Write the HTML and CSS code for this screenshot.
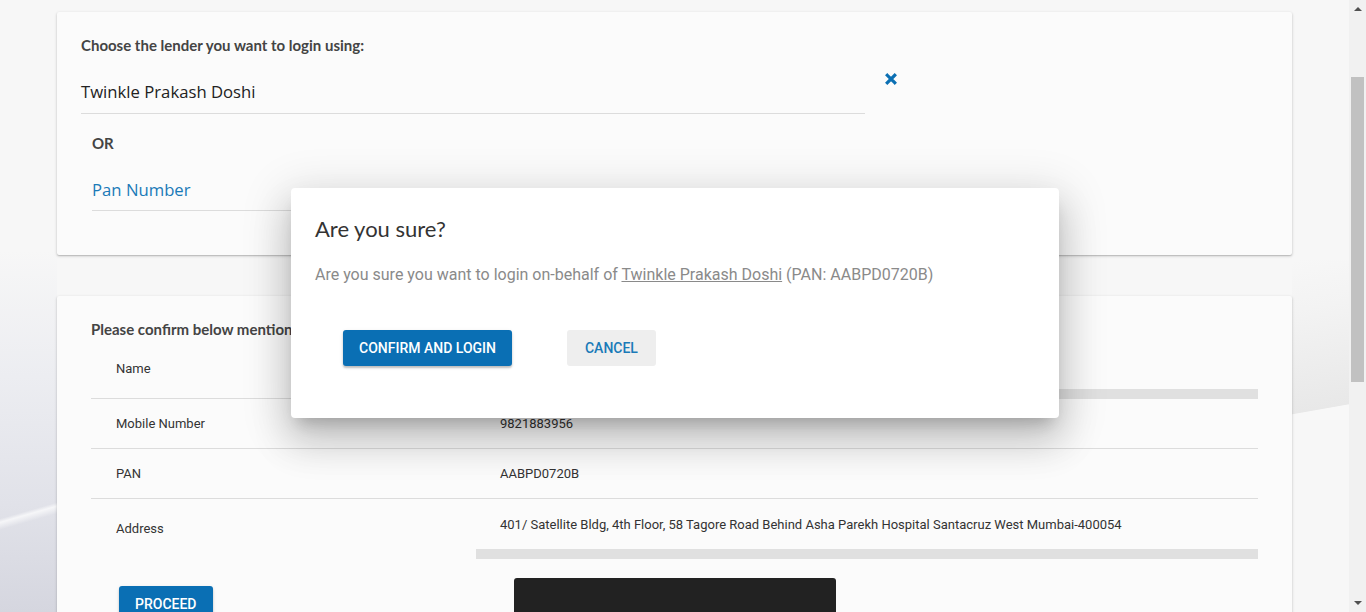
FILE: index.html
```html
<!DOCTYPE html>
<html lang="en">
<head>
<meta charset="utf-8">
<title>Login on behalf</title>
<link rel="stylesheet" href="styles.css">
</head>
<body>
<div class="app">
  <main class="page">
    <section class="card card-lender">
      <h2 class="card-title">Choose the lender you want to login using:</h2>
      <div class="lender-row">
        <div class="field field-lender"><span class="field-value">Twinkle Prakash Doshi</span></div>
        <button class="clear-btn" aria-label="Clear">
          <svg width="12" height="12" viewBox="0 0 12 12"><path d="M2.3 2.3L9.7 9.7M9.7 2.3L2.3 9.7" stroke="#0b6fb3" stroke-width="3.2" stroke-linecap="square" fill="none"/></svg>
        </button>
      </div>
      <div class="or-block">
        <p class="or-label">OR</p>
        <div class="field field-pan"><span class="field-placeholder">Pan Number</span></div>
      </div>
    </section>

    <section class="card card-confirm">
      <h2 class="card-title">Please confirm below mentioned details:</h2>
      <div class="details">
        <div class="detail-row row-name">
          <div class="detail-label">Name</div>
          <div class="detail-value value-bar">Twinkle Prakash Doshi</div>
        </div>
        <div class="detail-row">
          <div class="detail-label">Mobile Number</div>
          <div class="detail-value">9821883956</div>
        </div>
        <div class="detail-row">
          <div class="detail-label">PAN</div>
          <div class="detail-value">AABPD0720B</div>
        </div>
        <div class="detail-row row-address">
          <div class="detail-label">Address</div>
          <div class="detail-value value-bar">401/ Satellite Bldg, 4th Floor, 58 Tagore Road Behind Asha Parekh Hospital Santacruz West Mumbai-400054</div>
        </div>
      </div>
      <div class="actions">
        <button class="btn btn-primary">PROCEED</button>
        <div class="captcha"></div>
      </div>
    </section>
  </main>
  <div class="scrollbar">
    <span class="sb-arrow sb-up"></span>
    <span class="sb-thumb"></span>
    <span class="sb-arrow sb-down"></span>
  </div>
</div>

<div class="dialog" role="dialog">
  <h3 class="dialog-title">Are you sure?</h3>
  <p class="dialog-text">Are you sure you want to login on-behalf of <a class="dialog-link" href="#">Twinkle Prakash Doshi</a> (PAN: AABPD0720B)</p>
  <div class="dialog-actions">
    <button class="btn btn-primary">CONFIRM AND LOGIN</button>
    <button class="btn btn-flat">CANCEL</button>
  </div>
</div>
</body>
</html>
```
FILE: styles.css
```css
* { box-sizing: border-box; }

html, body {
  margin: 0;
  height: 612px;
  overflow: hidden;
}

body {
  background: #f7f7f7;
  font-family: Roboto, "Liberation Sans", sans-serif;
  color: #333;
  position: relative;
}

.app {
  display: flex;
  height: 612px;
}

.page {
  flex: 1;
  padding: 12px 57px 0;
  display: flex;
  flex-direction: column;
  gap: 41px;
  background:
    linear-gradient(164deg, transparent 0 71%, rgba(255,255,255,.7) 72%, transparent 74%) 0 250px / 57px 362px no-repeat,
    linear-gradient(180deg, #f7f7f7 0%, #ecedf1 35%, #e1e2e9 70%, #d5d6df 100%) 0 250px / 57px 362px no-repeat,
    linear-gradient(-10deg, #f8f8f8 0 9%, #e8e8e8 9.5%, #f3f3f3 70%, #f7f7f7 100%) right 0 top 260px / 57px 160px no-repeat,
    #f7f7f7;
}

.card {
  background: #fbfbfb;
  border-radius: 2px;
  box-shadow: 0 1px 3px rgba(0,0,0,.22), 0 1px 1px rgba(0,0,0,.1);
}

.card-title {
  margin: 0;
  font-family: Lato, "Liberation Sans", sans-serif;
  font-weight: 700;
  font-size: 15px;
  line-height: 18px;
  color: #444;
}

/* Lender card */
.card-lender {
  height: 243px;
  padding: 24px 24px 44px;
}

.lender-row {
  display: flex;
  align-items: flex-start;
  margin-top: 19px;
  gap: 20px;
}

.field {
  height: 41px;
  border-bottom: 1px solid #dcdcdc;
  display: flex;
  align-items: center;
  padding-bottom: 4px;
  font-family: "Open Sans", "Noto Sans", sans-serif;
  font-size: 16.7px;
}

.field-lender { width: 784px; }
.field-pan { width: 773px; padding-bottom: 2px; }

.field-value { color: #222; }
.field-placeholder { color: #1a7ab8; }

.clear-btn {
  border: 0;
  background: none;
  padding: 0;
  width: 12px;
  height: 12px;
  display: flex;
}

.or-block {
  padding-left: 11px;
  margin-top: 20px;
}

.or-label {
  margin: 0 0 18px;
  font-family: Lato, "Liberation Sans", sans-serif;
  font-weight: 700;
  font-size: 15px;
  line-height: 18px;
  color: #444;
}

/* Confirm card */
.card-confirm {
  flex: 1;
  padding: 24px 34px 0;
}

.details { display: flex; flex-direction: column; }

.detail-row { display: flex; font-size: 13px; color: #333; }

.detail-label {
  width: 385px;
  height: 50px;
  padding-left: 25px;
  display: flex;
  align-items: center;
  border-bottom: 1px solid #dcdcdc;
}

.detail-value {
  flex: 1;
  height: 50px;
  padding-left: 24px;
  display: flex;
  align-items: center;
  border-bottom: 1px solid #dcdcdc;
  white-space: nowrap;
  overflow: hidden;
}

.value-bar { border-bottom: 10px solid #e0e0e0; }

.row-name .detail-label { height: 61px; }
.row-name .detail-value { height: 61px; }

.row-address .detail-label { height: 58px; border-bottom: 0; }
.row-address .detail-value { height: 60px; }

.actions {
  display: flex;
  align-items: flex-start;
  margin-top: 19px;
  padding-left: 28px;
}

.actions .btn { margin-top: 8px; }

.captcha {
  width: 322px;
  height: 60px;
  margin-left: 301px;
  background: #222;
  border-radius: 3px 3px 0 0;
}

/* Buttons */
.btn {
  height: 36px;
  padding: 0 16px;
  border: 0;
  border-radius: 3px;
  font-family: Roboto, "Liberation Sans", sans-serif;
  font-weight: 500;
  font-size: 14px;
  line-height: 37px;
  cursor: pointer;
}

.btn-primary {
  background: #0a6fb4;
  color: #fff;
  box-shadow: 0 2px 2px rgba(0,0,0,.22), 0 1px 4px rgba(0,0,0,.08);
}

.btn-flat {
  min-width: 88px;
  padding: 0 18px;
  background: #eeeeee;
  color: #1a7ab8;
}

/* Scrollbar */
.scrollbar {
  width: 17px;
  background: #f1f1f1;
  display: flex;
  flex-direction: column;
  align-items: center;
}

.sb-arrow {
  width: 0;
  height: 0;
  border-left: 4px solid transparent;
  border-right: 4px solid transparent;
}

.sb-up {
  margin-top: 7px;
  border-bottom: 4px solid #505050;
}

.sb-thumb {
  width: 13px;
  height: 305px;
  margin-top: 66px;
  background: #c1c1c1;
}

.sb-down {
  margin-top: auto;
  margin-bottom: 7px;
  border-top: 4px solid #505050;
}

/* Dialog */
.dialog {
  position: absolute;
  left: 291px;
  top: 188px;
  width: 768px;
  padding: 28px 24px 52px;
  background: #fff;
  border-radius: 4px;
  box-shadow: 0 11px 15px -7px rgba(0,0,0,.2), 0 24px 38px 3px rgba(0,0,0,.14), 0 9px 46px 8px rgba(0,0,0,.12);
}

.dialog-title {
  margin: 0;
  font-family: Lato, "Liberation Sans", sans-serif;
  font-weight: 400;
  font-size: 22px;
  line-height: 25px;
  color: #333;
}

.dialog-text {
  margin: 22px 0 0;
  font-size: 16px;
  line-height: 24px;
  color: #8a8a8a;
}

.dialog-link {
  color: #8a8a8a;
  text-decoration: underline;
}

.dialog-actions {
  display: flex;
  gap: 55px;
  margin-top: 43px;
  padding-left: 28px;
}
```
